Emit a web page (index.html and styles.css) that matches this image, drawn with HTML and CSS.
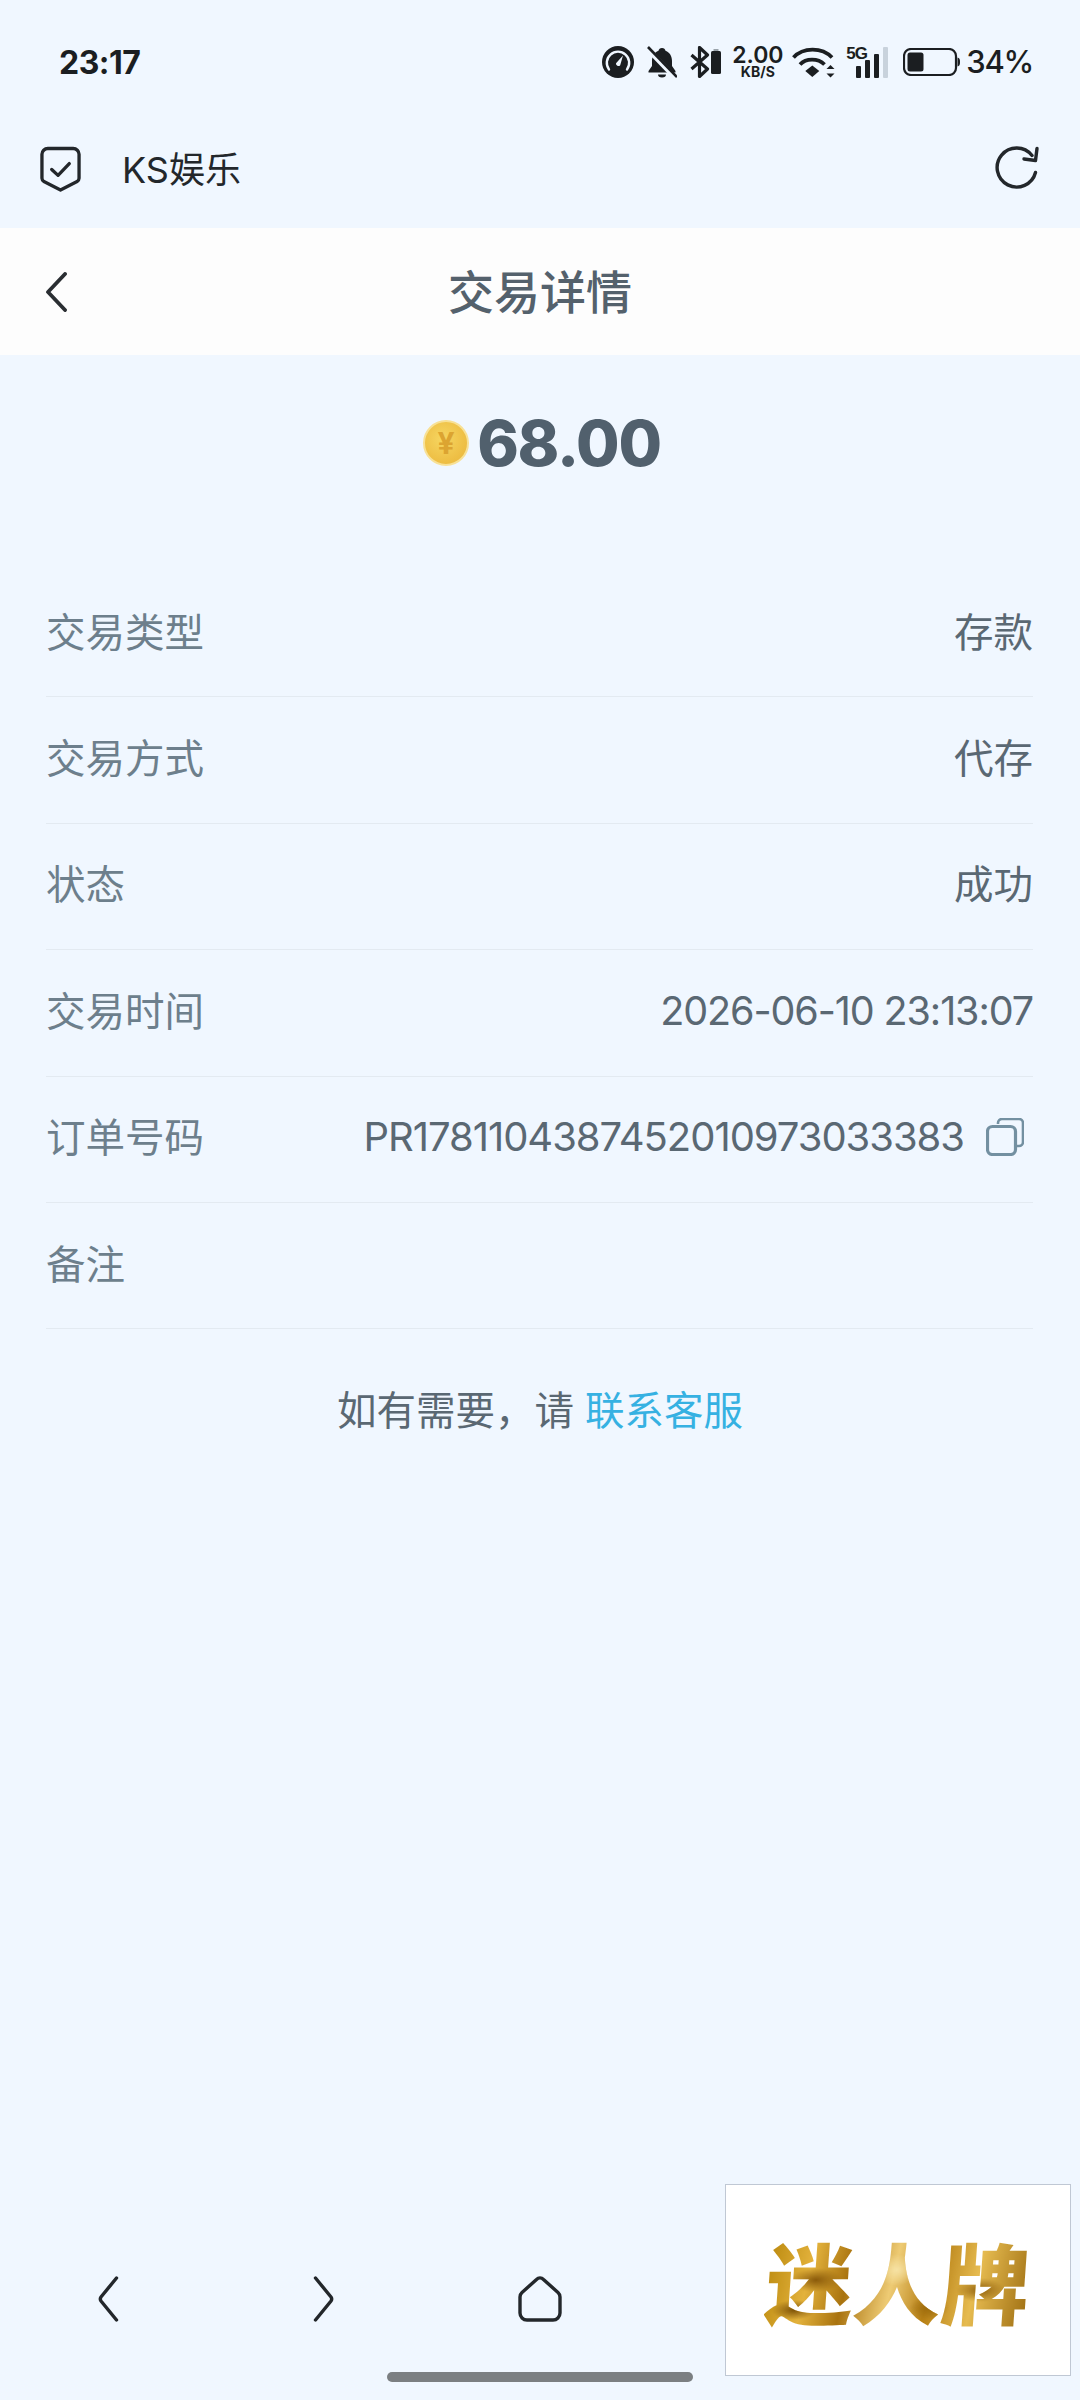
FILE: index.html
```html
<!DOCTYPE html>
<html lang="zh">
<head>
<meta charset="utf-8">
<title>交易详情</title>
<link rel="stylesheet" href="styles.css">
</head>
<body>
<div class="page">
  <header class="status">
    <span class="time">23:17</span>
    <div class="status-icons">
      <svg class="ic-gauge" viewBox="0 0 32 32"><circle cx="16" cy="16" r="16" fill="#1b1e21"/><path d="M7 23.500A11.200 11.200 0 1 1 25 23.500" fill="none" stroke="#f0f7ff" stroke-width="2.400" stroke-linecap="round"/><path d="M21 9.500L18.200 19.200a2.400 2.400 0 0 1-4.200-1.900z" fill="#f0f7ff"/></svg>
      <svg class="ic-bell" viewBox="0 0 30 32"><path d="M15 2c2 0 3.200 1.200 3.500 2.800C23 6.500 25 10.500 25 15v5l3.500 5v1.500h-27V25L5 20v-5C5 10.500 7 6.500 11.500 4.800 11.800 3.200 13 2 15 2z" fill="#1b1e21"/><path d="M11 28.500h8a4 3 0 0 1-8 0z" fill="#1b1e21"/><path d="M1 3.500l27 28" stroke="#f0f7ff" stroke-width="5"/><path d="M1 1l29 30" stroke="#1b1e21" stroke-width="2.600"/></svg>
      <svg class="ic-bt" viewBox="0 0 31 32"><path d="M1.500 9l16 14L9.500 30.500V1.500l8 7.500L1.500 23" fill="none" stroke="#1b1e21" stroke-width="3.200" stroke-linejoin="round"/><rect x="21" y="5" width="10" height="23" rx="1.500" fill="#1b1e21"/><rect x="23.500" y="3" width="5" height="2" fill="#9aa3aa"/></svg>
      <div class="speed"><span class="speed-num">2.00</span><span class="speed-unit">KB/S</span></div>
      <svg class="ic-wifi" viewBox="0 0 43 32"><path d="M1.500 11.500C11 1 30 1 40 11.500" fill="none" stroke="#1b1e21" stroke-width="3.800"/><path d="M8 18.500C14 12 26 12 32.500 18.500" fill="none" stroke="#1b1e21" stroke-width="3.800"/><path d="M20.300 19.500l7 5.500-7 6-7-6z" fill="#1b1e21"/><path d="M38.500 19l4 4h-8zM38.500 31.500l4-4h-8z" fill="#1b1e21"/></svg>
      <div class="signal">
        <span class="signal-label">5G</span>
        <span class="bar bar-1"></span><span class="bar bar-2"></span><span class="bar bar-3"></span><span class="bar bar-4"></span>
      </div>
      <svg class="ic-battery" viewBox="0 0 57 28"><rect x="1" y="1" width="52" height="26" rx="7" fill="none" stroke="#1b1e21" stroke-width="2.200"/><rect x="4.500" y="4.500" width="16" height="19" rx="2.500" fill="#1b1e21"/><path d="M54.500 9.500c1.800.4 2.500 1.500 2.500 4.500s-.7 4.100-2.500 4.500z" fill="#1b1e21"/></svg>
      <span class="pct">34%</span>
    </div>
  </header>

  <div class="topbar">
    <svg class="ic-shield" viewBox="0 0 42 46"><path d="M8 2h26a6 6 0 0 1 6 6v24.500a4 4 0 0 1-2 3.400L21 44.500 4 35.900a4 4 0 0 1-2-3.400V8a6 6 0 0 1 6-6z" fill="none" stroke="#23272b" stroke-width="3.400" stroke-linejoin="round"/><path d="M12 23.500l6.500 6L30 17.500" fill="none" stroke="#23272b" stroke-width="3.400" stroke-linecap="round" stroke-linejoin="round"/></svg>
    <span class="site">KS娱乐</span>
    <svg class="ic-refresh" viewBox="0 0 44 44"><path d="M40.500 26.500A19.500 19.500 0 1 1 37 9.500" fill="none" stroke="#23272b" stroke-width="3.400" stroke-linecap="round"/><path d="M42 2.500L40.500 14.500 29 13" fill="none" stroke="#23272b" stroke-width="3.400" stroke-linecap="round" stroke-linejoin="round"/></svg>
  </div>

  <div class="titlebar">
    <svg class="ic-back" viewBox="0 0 22 40"><path d="M20 2L3 20l17 18" fill="none" stroke="#2a2e32" stroke-width="3.800" stroke-linecap="round" stroke-linejoin="round"/></svg>
    <h1 class="title">交易详情</h1>
  </div>

  <div class="amount">
    <span class="coin"><span class="coin-mark">¥</span></span>
    <span class="amount-num">68.00</span>
  </div>

  <ul class="rows">
    <li class="row"><span class="label">交易类型</span><span class="value">存款</span></li>
    <li class="row"><span class="label">交易方式</span><span class="value">代存</span></li>
    <li class="row"><span class="label">状态</span><span class="value">成功</span></li>
    <li class="row"><span class="label">交易时间</span><span class="value value-date">2026-06-10 23:13:07</span></li>
    <li class="row"><span class="label">订单号码</span><span class="value value-order">PR1781104387452010973033383<svg class="ic-copy" viewBox="0 0 38 38"><path d="M12 6V5a4 4 0 0 1 4-4h17a4 4 0 0 1 4 4v19a4 4 0 0 1-4 4h-2" fill="none" stroke="#7390a1" stroke-width="2.600"/><rect x="1.500" y="8.500" width="28" height="28" rx="5" fill="none" stroke="#7390a1" stroke-width="3.200"/></svg></span></li>
    <li class="row"><span class="label">备注</span></li>
  </ul>

  <p class="help">如有需要，请 <a class="help-link">联系客服</a></p>

  <nav class="bottom-nav">
    <svg class="nav-ic" viewBox="0 0 22 46"><path d="M19.500 2L4 21a3.500 3.500 0 0 0 0 4l15.500 19" fill="none" stroke="#23272b" stroke-width="3.400" stroke-linecap="round"/></svg>
    <svg class="nav-ic" viewBox="0 0 22 46"><path d="M2.500 2L18 21a3.500 3.500 0 0 1 0 4L2.500 44" fill="none" stroke="#23272b" stroke-width="3.400" stroke-linecap="round"/></svg>
    <svg class="nav-ic nav-home" viewBox="0 0 46 46"><path d="M19.500 3.500a5 5 0 0 1 7 0L41 16.500a6 6 0 0 1 2 4.500v16a7 7 0 0 1-7 7H10a7 7 0 0 1-7-7V21a6 6 0 0 1 2-4.500z" fill="none" stroke="#23272b" stroke-width="3.400"/></svg>
  </nav>
  <div class="home-pill"></div>

  <aside class="ad"><span class="ad-text">迷人牌</span></aside>
</div>
</body>
</html>
```

FILE: styles.css
```css
* { box-sizing: border-box; }
html, body { margin: 0; padding: 0; }
body {
  width: 1080px;
  height: 2400px;
  overflow: hidden;
  background: #f0f7ff;
  font-family: "Inter", "Noto Sans CJK SC", sans-serif;
  color: #1b1e21;
}
.page {
  position: relative;
  width: 1080px;
  height: 2400px;
  display: flex;
  flex-direction: column;
}

/* status bar */
.status {
  height: 114px;
  padding: 0 47px 0 59px;
  display: flex;
  align-items: flex-start;
  justify-content: space-between;
}
.time {
  margin-top: 43px;
  font-size: 32px;
  line-height: 40px;
  font-weight: 700;
  letter-spacing: -0.5px;
}
.status-icons {
  margin-top: 46px;
  height: 32px;
  display: flex;
  align-items: center;
}
.ic-gauge { width: 32px; height: 32px; }
.ic-bell { width: 30px; height: 32px; margin-left: 13px; }
.ic-bt { width: 31px; height: 32px; margin-left: 13px; }
.speed {
  width: 51px;
  margin-left: 11px;
  height: 32px;
  display: flex;
  flex-direction: column;
  align-items: center;
}
.speed-num { font-size: 23px; line-height: 19px; font-weight: 600; }
.speed-unit { font-size: 14px; line-height: 13px; font-weight: 700; }
.ic-wifi { width: 43px; height: 32px; margin-left: 9px; }
.signal {
  position: relative;
  width: 42px;
  height: 32px;
  margin-left: 11px;
  display: flex;
  align-items: flex-end;
  justify-content: flex-end;
  gap: 4px;
}
.signal-label {
  position: absolute;
  left: 0;
  top: 0;
  font-family: "Liberation Sans", sans-serif;
  font-size: 17px;
  line-height: 15px;
  font-weight: 700;
  letter-spacing: -1px;
}
.bar { width: 5px; border-radius: 1px; background: #1b1e21; }
.bar-1 { height: 12px; }
.bar-2 { height: 18px; }
.bar-3 { height: 24px; }
.bar-4 { height: 31px; background: #c8d2dc; }
.ic-battery { width: 57px; height: 28px; margin-left: 15px; }
.pct {
  margin-left: 6px;
  font-size: 31px;
  line-height: 32px;
  font-weight: 500;
  letter-spacing: -1.3px;
}

/* browser-like bar */
.topbar {
  height: 114px;
  padding: 32px 41px 0 40px;
  display: flex;
  align-items: flex-start;
}
.ic-shield { width: 41px; height: 46px; }
.site {
  margin-left: 41px;
  font-size: 36px;
  line-height: 48px;
  color: #23272b;
}
.ic-refresh { width: 44px; height: 44px; margin-left: auto; }

/* title */
.titlebar {
  position: relative;
  height: 127px;
  background: #fdfdfd;
  display: flex;
  align-items: center;
  justify-content: center;
}
.ic-back { position: absolute; left: 45px; top: 44px; width: 22px; height: 40px; }
.title {
  margin: 0;
  font-size: 46px;
  line-height: 60px;
  font-weight: 500;
  color: #54616c;
}

/* amount */
.amount {
  margin-top: 52px;
  height: 72px;
  display: flex;
  align-items: center;
  justify-content: center;
  gap: 8px;
  padding-left: 4px;
}
.coin {
  width: 46px;
  height: 46px;
  border-radius: 50%;
  border: 2px solid #f8e196;
  background: radial-gradient(circle at 42% 40%, #f6d661 0%, #eebf45 65%, #e6b53e 100%);
  display: flex;
  align-items: center;
  justify-content: center;
}
.coin-mark {
  font-size: 30px;
  line-height: 30px;
  font-weight: 700;
  color: #dca431;
}
.amount-num {
  font-size: 63px;
  line-height: 72px;
  font-weight: 800;
  letter-spacing: -1.2px;
  color: #51606d;
}

/* rows */
.rows {
  list-style: none;
  margin: 92px 47px 0 46px;
  padding: 0;
}
.row {
  height: 126.4px;
  padding-bottom: 9px;
  border-bottom: 1px solid #e3eaf1;
  display: flex;
  align-items: center;
  justify-content: space-between;
  font-size: 39.5px;
}
.label { color: #6d7f8c; }
.value { color: #5a6873; }
.value-date { letter-spacing: -1.1px; margin-top: 5px; }
.value-order {
  display: flex;
  align-items: center;
  margin-top: 4px;
  font-size: 40px;
  letter-spacing: -1.04px;
}
.ic-copy { width: 38px; height: 38px; margin-left: 22px; margin-right: 9px; }

/* help */
.help {
  margin: 55px 0 0;
  text-align: center;
  font-size: 39.5px;
  line-height: 54px;
  color: #5a6873;
}
.help-link { color: #36b1e2; }

/* bottom nav */
.bottom-nav {
  position: absolute;
  left: 0;
  right: 0;
  top: 2276px;
  display: grid;
  grid-template-columns: repeat(5, 216px);
  justify-items: center;
}
.nav-ic { width: 22px; height: 46px; }
.nav-home { width: 46px; }
.home-pill {
  position: absolute;
  left: 387px;
  top: 2372px;
  width: 306px;
  height: 10px;
  border-radius: 5px;
  background: #7b7f82;
}
.ad {
  position: absolute;
  left: 725px;
  top: 2184px;
  width: 346px;
  height: 192px;
  background: #fff;
  border: 1px solid #c0c8d4;
  display: flex;
  align-items: center;
  justify-content: center;
}
.ad-text {
  font-family: "Noto Sans CJK SC", sans-serif;
  font-size: 88px;
  line-height: 100px;
  font-weight: 900;
  transform: skewX(-4deg);
  background:
    radial-gradient(ellipse 26px 12px at 50px 50px, #8a5a0a 0%, rgba(138,90,10,0) 100%),
    radial-gradient(ellipse 20px 16px at 130px 40px, #f6e2a4 0%, rgba(246,226,164,0) 100%),
    radial-gradient(ellipse 24px 12px at 215px 60px, #8f5f0b 0%, rgba(143,95,11,0) 100%),
    radial-gradient(ellipse 22px 10px at 30px 80px, #7d5208 0%, rgba(125,82,8,0) 100%),
    radial-gradient(ellipse 20px 12px at 165px 78px, #9c6b0d 0%, rgba(156,107,13,0) 100%),
    linear-gradient(100deg, #b8860b 0%, #e3b23c 18%, #a9730f 32%, #eecb74 48%, #b67f14 62%, #e6bb50 78%, #9c6c10 100%);
  -webkit-background-clip: text;
  background-clip: text;
  color: transparent;
}
```
